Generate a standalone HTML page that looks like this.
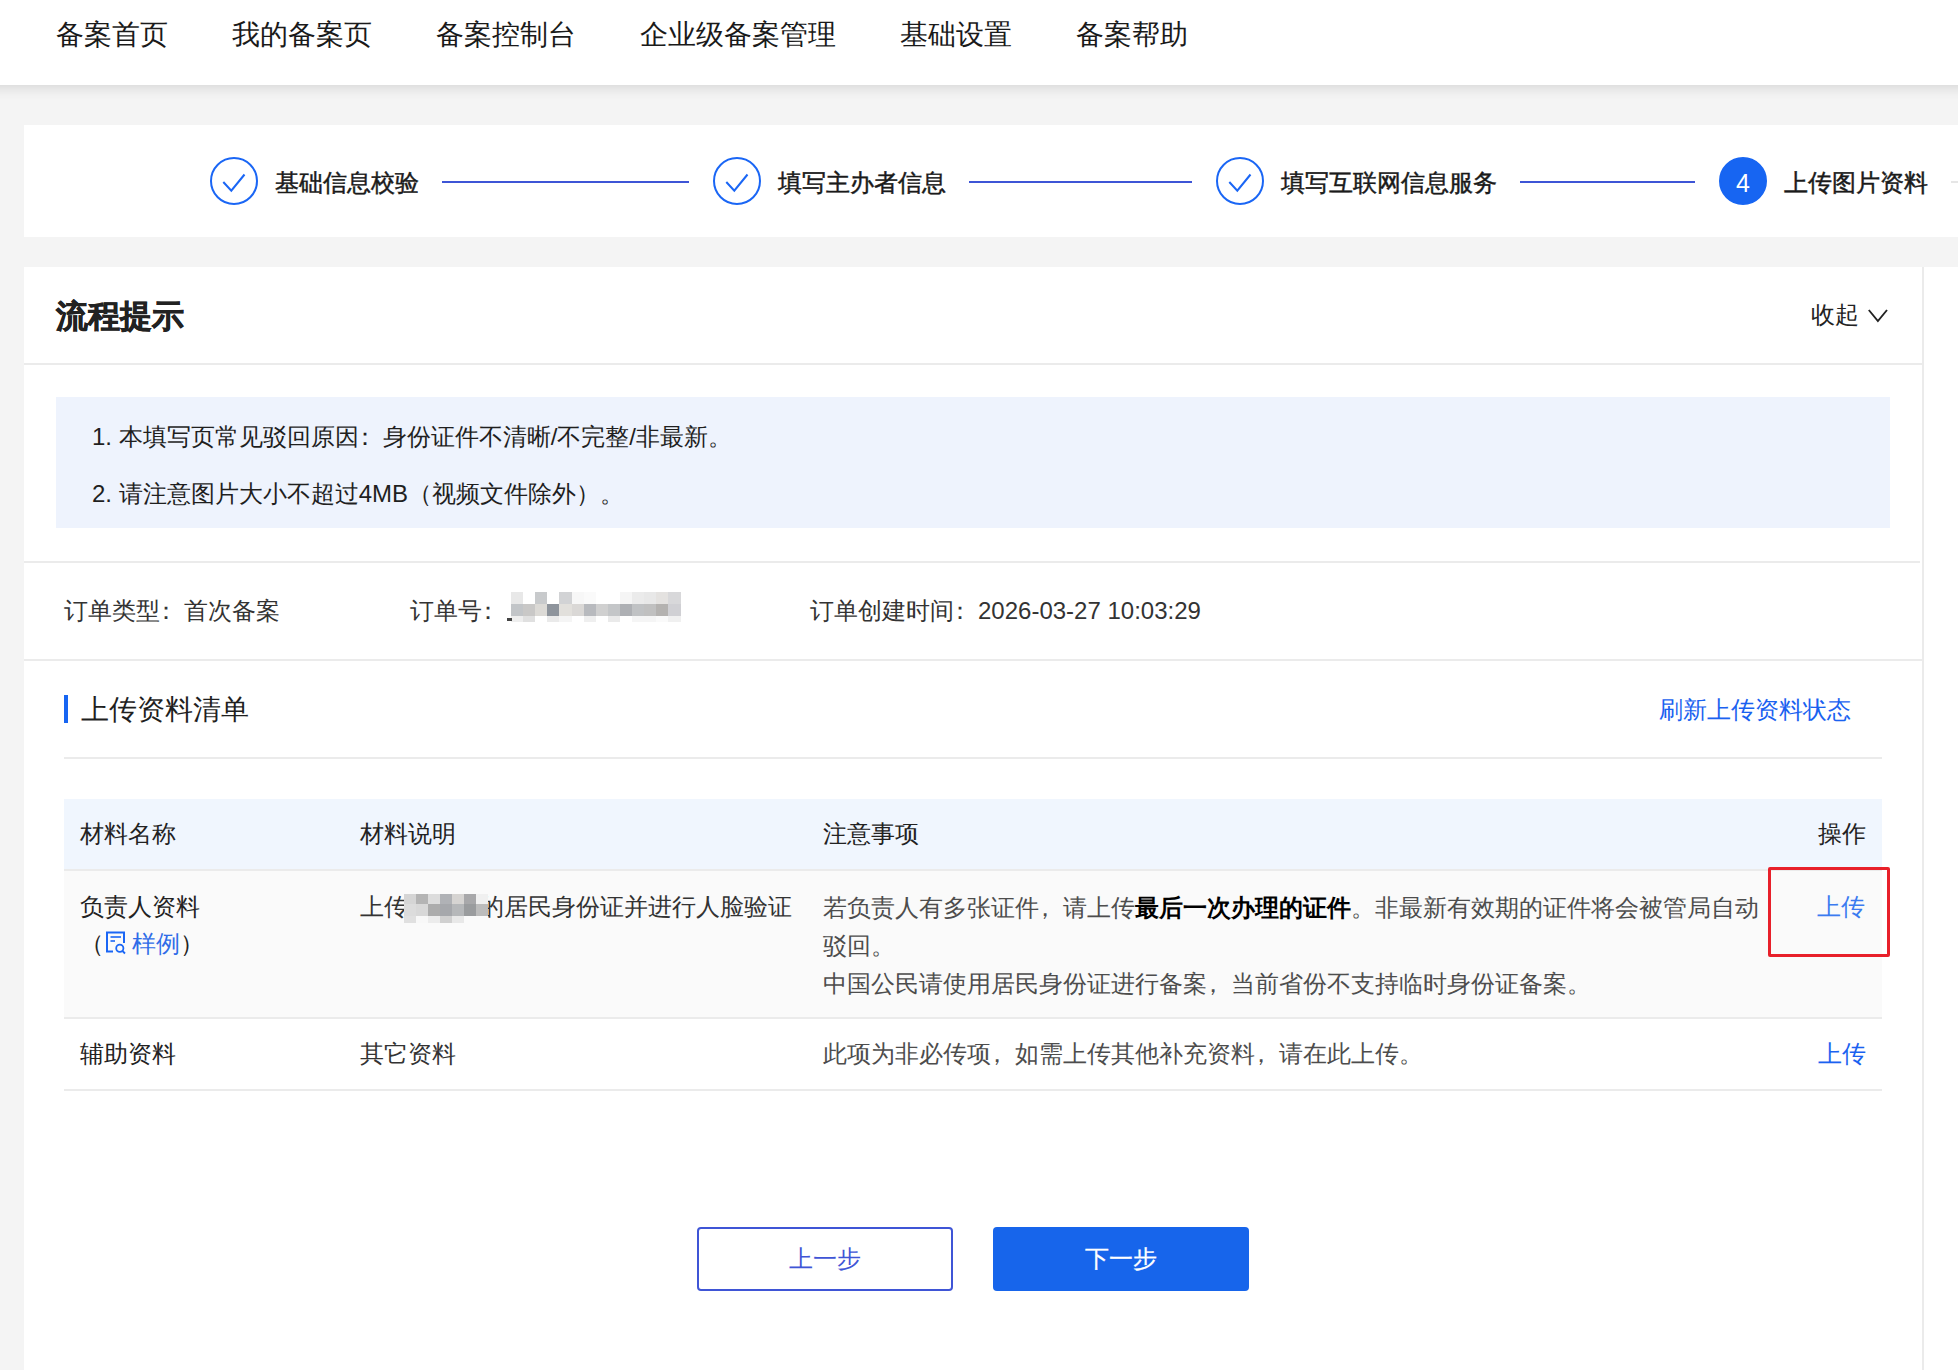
<!DOCTYPE html>
<html><head><meta charset="utf-8">
<style>
*{margin:0;padding:0;box-sizing:border-box}
html,body{width:1958px;height:1370px;overflow:hidden}
body{background:#f4f4f4;font-family:"Liberation Sans",sans-serif;color:#1f1f1f;position:relative}
.a{position:absolute;white-space:nowrap}
.nav{position:absolute;left:-30px;top:0;width:2020px;height:85px;background:#fff;box-shadow:0 3px 12px rgba(0,0,0,.12)}
.nav .in{position:absolute;left:30px;top:0}
.nav .a{font-size:28px;line-height:28px;top:21px;color:#1a1a1a}
.steps{position:absolute;left:24px;top:125px;width:1934px;height:112px;background:#fff}
.circ{position:absolute;top:32px;width:48px;height:48px;border:2px solid #1a66f5;border-radius:50%}
.circ svg{position:absolute;left:0;top:0}
.circ.on{background:#1765f2;border-color:#1765f2;color:#fff;font-size:25px;line-height:49px;text-align:center}
.sl{position:absolute;top:46px;font-size:24px;line-height:24px;color:#1a1a1a;-webkit-text-stroke:0.45px #1a1a1a}
.ln{position:absolute;top:56px;height:2px;background:#3e55d6}
.main{position:absolute;left:24px;top:267px;width:1934px;height:1103px;background:#fff}
.inner{position:absolute;left:0;top:0;width:1900px;height:1103px;border-right:2px solid #ebebeb}
.hr{position:absolute;height:2px;background:#ebebeb}
.t24{font-size:24px;line-height:24px}
.pc{position:relative;left:-6px}
.mz i{position:absolute;display:block}

</style></head><body>

<div class="nav"><div class="in">
  <div class="a" style="left:56px">备案首页</div>
  <div class="a" style="left:232px">我的备案页</div>
  <div class="a" style="left:436px">备案控制台</div>
  <div class="a" style="left:640px">企业级备案管理</div>
  <div class="a" style="left:900px">基础设置</div>
  <div class="a" style="left:1076px">备案帮助</div>
</div></div>

<div class="steps">
  <div class="circ" style="left:186px"><svg width="44" height="44" viewBox="0 0 44 44"><path d="M11.3 23 L19.3 31.7 L32.5 15.5" fill="none" stroke="#1a66f5" stroke-width="2"/></svg></div>
  <div class="sl" style="left:251px">基础信息校验</div>
  <div class="ln" style="left:418px;width:247px"></div>
  <div class="circ" style="left:689px"><svg width="44" height="44" viewBox="0 0 44 44"><path d="M11.3 23 L19.3 31.7 L32.5 15.5" fill="none" stroke="#1a66f5" stroke-width="2"/></svg></div>
  <div class="sl" style="left:754px">填写主办者信息</div>
  <div class="ln" style="left:945px;width:223px"></div>
  <div class="circ" style="left:1192px"><svg width="44" height="44" viewBox="0 0 44 44"><path d="M11.3 23 L19.3 31.7 L32.5 15.5" fill="none" stroke="#1a66f5" stroke-width="2"/></svg></div>
  <div class="sl" style="left:1257px">填写互联网信息服务</div>
  <div class="ln" style="left:1496px;width:175px"></div>
  <div class="circ on" style="left:1695px">4</div>
  <div class="sl" style="left:1760px">上传图片资料</div>
  <div class="ln" style="left:1927px;width:40px;background:#e6e6e6"></div>
</div>

<div class="main">
  <div class="inner"></div>
  <div class="a" style="left:32px;top:33px;font-size:32px;line-height:32px;font-weight:bold;color:#222;-webkit-text-stroke:0.6px #222">流程提示</div>
  <div class="a t24" style="left:1787px;top:36px;color:#222">收起</div>
  <svg class="a" style="left:1842px;top:40px" width="24" height="16" viewBox="0 0 24 16"><path d="M2.8 3 L11.9 14 L21 3" fill="none" stroke="#222" stroke-width="1.9"/></svg>
  <div class="hr" style="left:0;top:96px;width:1898px"></div>
  <div class="a" style="left:32px;top:130px;width:1834px;height:131px;background:#eef3fd"></div>
  <div class="a t24" style="left:68px;top:158px;color:#1f1f1f">1. 本填写页常见驳回原因<span class="pc">：</span>身份证件不清晰/不完整/非最新。</div>
  <div class="a t24" style="left:68px;top:215px;color:#1f1f1f">2. 请注意图片大小不超过4MB（视频文件除外）。</div>
  <div class="hr" style="left:0;top:294px;width:1896px"></div>
  <div class="a t24" style="left:40px;top:332px;color:#333">订单类型<span class="pc">：</span>首次备案</div>
  <div class="a t24" style="left:386px;top:332px;color:#333">订单号<span class="pc">：</span></div>
  <div class="a t24" style="left:786px;top:332px;color:#333">订单创建时间<span class="pc">：</span>2026-03-27 10:03:29</div>
  <div class="mz" style="position:absolute;left:0;top:0;filter:blur(0.7px)">
<i style="left:487.0px;top:325.0px;width:12.6px;height:12.5px;background:#e8e8e8"></i>
<i style="left:499.1px;top:325.0px;width:12.6px;height:12.5px;background:#fff"></i>
<i style="left:511.2px;top:325.0px;width:12.6px;height:12.5px;background:#c8cacc"></i>
<i style="left:523.3px;top:325.0px;width:12.6px;height:12.5px;background:#fff"></i>
<i style="left:535.4px;top:325.0px;width:12.6px;height:12.5px;background:#d2d3d5"></i>
<i style="left:547.5px;top:325.0px;width:12.6px;height:12.5px;background:#f7f7f7"></i>
<i style="left:559.6px;top:325.0px;width:12.6px;height:12.5px;background:#fafafa"></i>
<i style="left:571.7px;top:325.0px;width:12.6px;height:12.5px;background:#fff"></i>
<i style="left:583.8px;top:325.0px;width:12.6px;height:12.5px;background:#fff"></i>
<i style="left:595.9px;top:325.0px;width:12.6px;height:12.5px;background:#f5f5f5"></i>
<i style="left:608.0px;top:325.0px;width:12.6px;height:12.5px;background:#ebebeb"></i>
<i style="left:620.1px;top:325.0px;width:12.6px;height:12.5px;background:#e8e8e8"></i>
<i style="left:632.2px;top:325.0px;width:12.6px;height:12.5px;background:#e4e2e0"></i>
<i style="left:644.3px;top:325.0px;width:12.6px;height:12.5px;background:#d8d8da"></i>
<i style="left:487.0px;top:337.0px;width:12.6px;height:12.5px;background:#c2c5c8"></i>
<i style="left:499.1px;top:337.0px;width:12.6px;height:12.5px;background:#c9c8c7"></i>
<i style="left:511.2px;top:337.0px;width:12.6px;height:12.5px;background:#dcdad6"></i>
<i style="left:523.3px;top:337.0px;width:12.6px;height:12.5px;background:#8e949c"></i>
<i style="left:535.4px;top:337.0px;width:12.6px;height:12.5px;background:#e2e0dc"></i>
<i style="left:547.5px;top:337.0px;width:12.6px;height:12.5px;background:#dad8d6"></i>
<i style="left:559.6px;top:337.0px;width:12.6px;height:12.5px;background:#b8babe"></i>
<i style="left:571.7px;top:337.0px;width:12.6px;height:12.5px;background:#d0d0d0"></i>
<i style="left:583.8px;top:337.0px;width:12.6px;height:12.5px;background:#c4c6c8"></i>
<i style="left:595.9px;top:337.0px;width:12.6px;height:12.5px;background:#aeb0b4"></i>
<i style="left:608.0px;top:337.0px;width:12.6px;height:12.5px;background:#c0c2c4"></i>
<i style="left:620.1px;top:337.0px;width:12.6px;height:12.5px;background:#c0c0c0"></i>
<i style="left:632.2px;top:337.0px;width:12.6px;height:12.5px;background:#b4b2b0"></i>
<i style="left:644.3px;top:337.0px;width:12.6px;height:12.5px;background:#d0d0d4"></i>
<i style="left:487.0px;top:349.0px;width:12.6px;height:5.5px;background:#eee"></i>
<i style="left:499.1px;top:349.0px;width:12.6px;height:5.5px;background:#e0e0e0"></i>
<i style="left:511.2px;top:349.0px;width:12.6px;height:5.5px;background:#fff"></i>
<i style="left:523.3px;top:349.0px;width:12.6px;height:5.5px;background:#eaeaea"></i>
<i style="left:535.4px;top:349.0px;width:12.6px;height:5.5px;background:#f5f5f5"></i>
<i style="left:547.5px;top:349.0px;width:12.6px;height:5.5px;background:#fff"></i>
<i style="left:559.6px;top:349.0px;width:12.6px;height:5.5px;background:#efefef"></i>
<i style="left:571.7px;top:349.0px;width:12.6px;height:5.5px;background:#fff"></i>
<i style="left:583.8px;top:349.0px;width:12.6px;height:5.5px;background:#eaeaea"></i>
<i style="left:595.9px;top:349.0px;width:12.6px;height:5.5px;background:#fff"></i>
<i style="left:608.0px;top:349.0px;width:12.6px;height:5.5px;background:#f5f5f5"></i>
<i style="left:620.1px;top:349.0px;width:12.6px;height:5.5px;background:#f5f5f5"></i>
<i style="left:632.2px;top:349.0px;width:12.6px;height:5.5px;background:#fafafa"></i>
<i style="left:644.3px;top:349.0px;width:12.6px;height:5.5px;background:#f0f0f0"></i>
  </div>
  <div class="a" style="left:483px;top:351px;width:5px;height:3px;background:#444"></div>
  <div class="hr" style="left:0;top:392px;width:1898px"></div>
  <div class="a" style="left:40px;top:428px;width:4px;height:28px;background:#1765f2"></div>
  <div class="a" style="left:57px;top:429px;font-size:28px;line-height:28px;color:#1f1f1f">上传资料清单</div>
  <div class="a t24" style="left:1635px;top:431px;color:#1a62f0">刷新上传资料状态</div>
  <div class="hr" style="left:40px;top:490px;width:1818px"></div>
  <div class="a" style="left:40px;top:532px;width:1818px;height:70px;background:#f0f6fe"></div>
  <div class="hr" style="left:40px;top:602px;width:1818px"></div>
  <div class="a" style="left:40px;top:604px;width:1818px;height:146px;background:#fafafa"></div>
  <div class="hr" style="left:40px;top:750px;width:1818px"></div>
  <div class="hr" style="left:40px;top:822px;width:1818px"></div>
  <div class="a t24" style="left:56px;top:555px;color:#222">材料名称</div>
  <div class="a t24" style="left:336px;top:555px;color:#222">材料说明</div>
  <div class="a t24" style="left:799px;top:555px;color:#222">注意事项</div>
  <div class="a t24" style="left:1794px;top:555px;color:#222">操作</div>
  <div class="a t24" style="left:56px;top:628px;color:#222">负责人资料</div>
  <div class="a t24" style="left:56px;top:665px;color:#222">（<span style="display:inline-block;width:28px"></span><span style="color:#2f6ce8">样例</span>）</div>
  <svg class="a" style="left:80px;top:662px" width="22" height="26" viewBox="0 0 22 26"><path d="M9 22.5 H3 V3.5 H20 V14" fill="none" stroke="#1a66f5" stroke-width="2"/><path d="M6.5 8 H17" stroke="#1a66f5" stroke-width="1.6"/><path d="M6.5 12 H11" stroke="#1a66f5" stroke-width="1.6"/><circle cx="15.8" cy="19.3" r="3.6" fill="none" stroke="#1a66f5" stroke-width="1.8"/><path d="M18.5 22 L21 24.5" stroke="#1a66f5" stroke-width="1.8"/></svg>
  <div class="a t24" style="left:336px;top:628px;color:#333">上传负责人的居民身份证并进行人脸验证</div>
  <div class="mz" style="position:absolute;left:0;top:0;filter:blur(0.7px)">
<i style="left:379.6px;top:627.0px;width:12.5px;height:10.5px;background:#d5d5d5"></i>
<i style="left:391.6px;top:627.0px;width:12.5px;height:10.5px;background:#b4b4b4"></i>
<i style="left:403.6px;top:627.0px;width:12.5px;height:10.5px;background:#dcdcdc"></i>
<i style="left:415.6px;top:627.0px;width:12.5px;height:10.5px;background:#b0b2b6"></i>
<i style="left:427.6px;top:627.0px;width:12.5px;height:10.5px;background:#d6d4d2"></i>
<i style="left:439.6px;top:627.0px;width:12.5px;height:10.5px;background:#a8a8aa"></i>
<i style="left:451.6px;top:627.0px;width:12.5px;height:10.5px;background:#f0f0f0"></i>
<i style="left:379.6px;top:637.0px;width:12.5px;height:12.1px;background:#dcdcdc"></i>
<i style="left:391.6px;top:637.0px;width:12.5px;height:12.1px;background:#d8d8d8"></i>
<i style="left:403.6px;top:637.0px;width:12.5px;height:12.1px;background:#acacac"></i>
<i style="left:415.6px;top:637.0px;width:12.5px;height:12.1px;background:#a6a8ac"></i>
<i style="left:427.6px;top:637.0px;width:12.5px;height:12.1px;background:#b6b8ba"></i>
<i style="left:439.6px;top:637.0px;width:12.5px;height:12.1px;background:#9a9c9e"></i>
<i style="left:451.6px;top:637.0px;width:12.5px;height:12.1px;background:#bcbcbc"></i>
<i style="left:379.6px;top:648.6px;width:12.5px;height:7.5px;background:#e0e0e0"></i>
<i style="left:391.6px;top:648.6px;width:12.5px;height:7.5px;background:#f8f8f8"></i>
<i style="left:403.6px;top:648.6px;width:12.5px;height:7.5px;background:#ececec"></i>
<i style="left:415.6px;top:648.6px;width:12.5px;height:7.5px;background:#d0d0d0"></i>
<i style="left:427.6px;top:648.6px;width:12.5px;height:7.5px;background:#e8e8e8"></i>
<i style="left:439.6px;top:648.6px;width:12.5px;height:7.5px;background:#fafafa"></i>
<i style="left:451.6px;top:648.6px;width:12.5px;height:7.5px;background:#fafafa"></i>
  </div>
  <div class="a t24" style="left:799px;top:628px;color:#4d4d4d;line-height:38px;margin-top:-6px">若负责人有多张证件<span class="pc">，</span>请上传<b style="color:#000">最后一次办理的证件</b>。非最新有效期的证件将会被管局自动<br>驳回。<br>中国公民请使用居民身份证进行备案<span class="pc">，</span>当前省份不支持临时身份证备案。</div>
  <div class="a t24" style="left:1793px;top:628px;color:#3b7bf0">上传</div>
  <div class="a" style="left:1744px;top:600px;width:122px;height:90px;border:3.5px solid #e8202a;border-radius:2px"></div>
  <div class="a t24" style="left:56px;top:775px;color:#222">辅助资料</div>
  <div class="a t24" style="left:336px;top:775px;color:#333">其它资料</div>
  <div class="a t24" style="left:799px;top:775px;color:#4d4d4d">此项为非必传项<span class="pc">，</span>如需上传其他补充资料<span class="pc">，</span>请在此上传。</div>
  <div class="a t24" style="left:1794px;top:775px;color:#1a62f0">上传</div>
  <div class="a" style="left:673px;top:960px;width:256px;height:64px;border:2px solid #3f55d6;border-radius:4px"></div>
  <div class="a t24" style="left:765px;top:980px;color:#3f55d6">上一步</div>
  <div class="a" style="left:969px;top:960px;width:256px;height:64px;background:#1765eb;border-radius:4px"></div>
  <div class="a t24" style="left:1061px;top:980px;color:#fff;-webkit-text-stroke:0.3px #fff">下一步</div>
</div>

</body></html>
